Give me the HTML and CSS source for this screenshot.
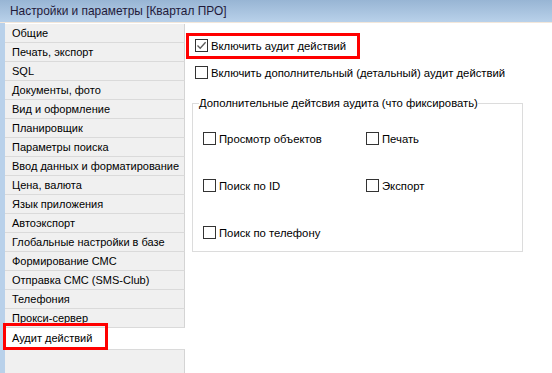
FILE: index.html
```html
<!DOCTYPE html>
<html lang="ru">
<head>
    <meta charset="UTF-8">
    <title>Настройки и параметры</title>
    <link rel="stylesheet" href="styles.css">
</head>
<body>
    <div class="window">
        <div class="titlebar">Настройки и параметры [Квартал ПРО]</div>
        <div class="main">
            <div class="strip"></div>
            <div class="tabs">
                <div class="tab">Общие</div>
                <div class="tab">Печать, экспорт</div>
                <div class="tab">SQL</div>
                <div class="tab">Документы, фото</div>
                <div class="tab">Вид и оформление</div>
                <div class="tab">Планировщик</div>
                <div class="tab">Параметры поиска</div>
                <div class="tab">Ввод данных и форматирование</div>
                <div class="tab">Цена, валюта</div>
                <div class="tab">Язык приложения</div>
                <div class="tab">Автоэкспорт</div>
                <div class="tab">Глобальные настройки в базе</div>
                <div class="tab">Формирование СМС</div>
                <div class="tab">Отправка СМС (SMS-Club)</div>
                <div class="tab">Телефония</div>
                <div class="tab">Прокси-сервер</div>
                <div class="tab active"><span class="mark tabmark">Аудит действий</span></div>
                <div class="tabs-rest"></div>
            </div>
            <div class="content">
                <div class="mark checkmark">
                    <label class="chk"><span class="box on"><svg width="11" height="11" viewBox="0 0 11 11"><path d="M1.5 5.5 L4.2 8.3 L9.6 2.2" fill="none" stroke="#5a5a5a" stroke-width="1.3"/></svg></span>Включить аудит действий</label>
                </div>
                <label class="chk second"><span class="box"></span>Включить дополнительный (детальный) аудит действий</label>

                <fieldset class="group">
                    <legend>Дополнительные дейтсвия аудита (что фиксировать)</legend>
                    <div class="opts">
                        <label class="chk"><span class="box"></span>Просмотр объектов</label>
                        <label class="chk"><span class="box"></span>Печать</label>
                        <label class="chk"><span class="box"></span>Поиск по ID</label>
                        <label class="chk"><span class="box"></span>Экспорт</label>
                        <label class="chk"><span class="box"></span>Поиск по телефону</label>
                    </div>
                </fieldset>
            </div>
        </div>
    </div>
</body>
</html>
```

FILE: styles.css
```css
*{
    margin: 0;
    padding: 0;
    box-sizing: border-box;
}
body{
    font-family: "Liberation Sans", Arial, sans-serif;
    font-size: 11.3px;
    color: #000;
    background: #fff;
    width: 552px;
    height: 373px;
    overflow: hidden;
}
.titlebar{
    height: 23px;
    padding: 4px 0 0 10px;
    font-size: 11.9px;
    color: #1f1a3a;
    background: linear-gradient(#98b5d4, #b9d1ea);
    border-bottom: 1px solid #f3e7da;
}
.main{
    display: flex;
    height: 350px;
}
.strip{
    width: 5px;
    background: #b9d1ea;
}
.tabs{
    width: 180px;
    display: flex;
    flex-direction: column;
    padding-top: 1px;
    background: #fff;
    font-size: 11px;
}
.tab{
    height: 19px;
    padding: 3px 0 0 7px;
    background: #f0f0f0;
    border-bottom: 1px solid #dadada;
    border-right: 1px solid #d4d4d4;
    white-space: nowrap;
}
.tab.active{
    background: #fff;
    border: none;
    height: 21px;
    padding: 0;
}
.tabs-rest{
    flex: 1;
    background: #f0f0f0;
    border-right: 1px solid #d4d4d4;
    border-top: 1px solid #dadada;
}
.mark{
    border: 3px solid #f00;
}
.tabmark{
    display: block;
    width: 105px;
    height: 27px;
    margin: -5px 0 0 -2px;
    padding: 6px 0 0 6px;
    position: relative;
}
.content{
    flex: 1;
    padding: 10px 0 0 1px;
}
.chk{
    display: flex;
    align-items: center;
    gap: 3px;
    height: 13px;
    white-space: nowrap;
}
.box{
    width: 13px;
    height: 13px;
    border: 1px solid #333;
    background: #fff;
    display: flex;
    align-items: center;
    justify-content: center;
}
.checkmark{
    width: 174px;
    height: 26px;
    padding: 3px 0 0 6px;
}
.second{
    margin: 7px 0 0 9px;
}
.group{
    margin: 18px 0 0 6px;
    width: 331px;
    height: 155px;
    border: 1px solid #dcdcdc;
    padding: 0 0 0 6px;
}
.group legend{
    padding: 0;
    line-height: 13px;
}
.opts{
    display: grid;
    grid-template-columns: 163px 1fr;
    grid-auto-rows: 13px;
    row-gap: 34px;
    margin: 22px 0 0 4px;
}
```
